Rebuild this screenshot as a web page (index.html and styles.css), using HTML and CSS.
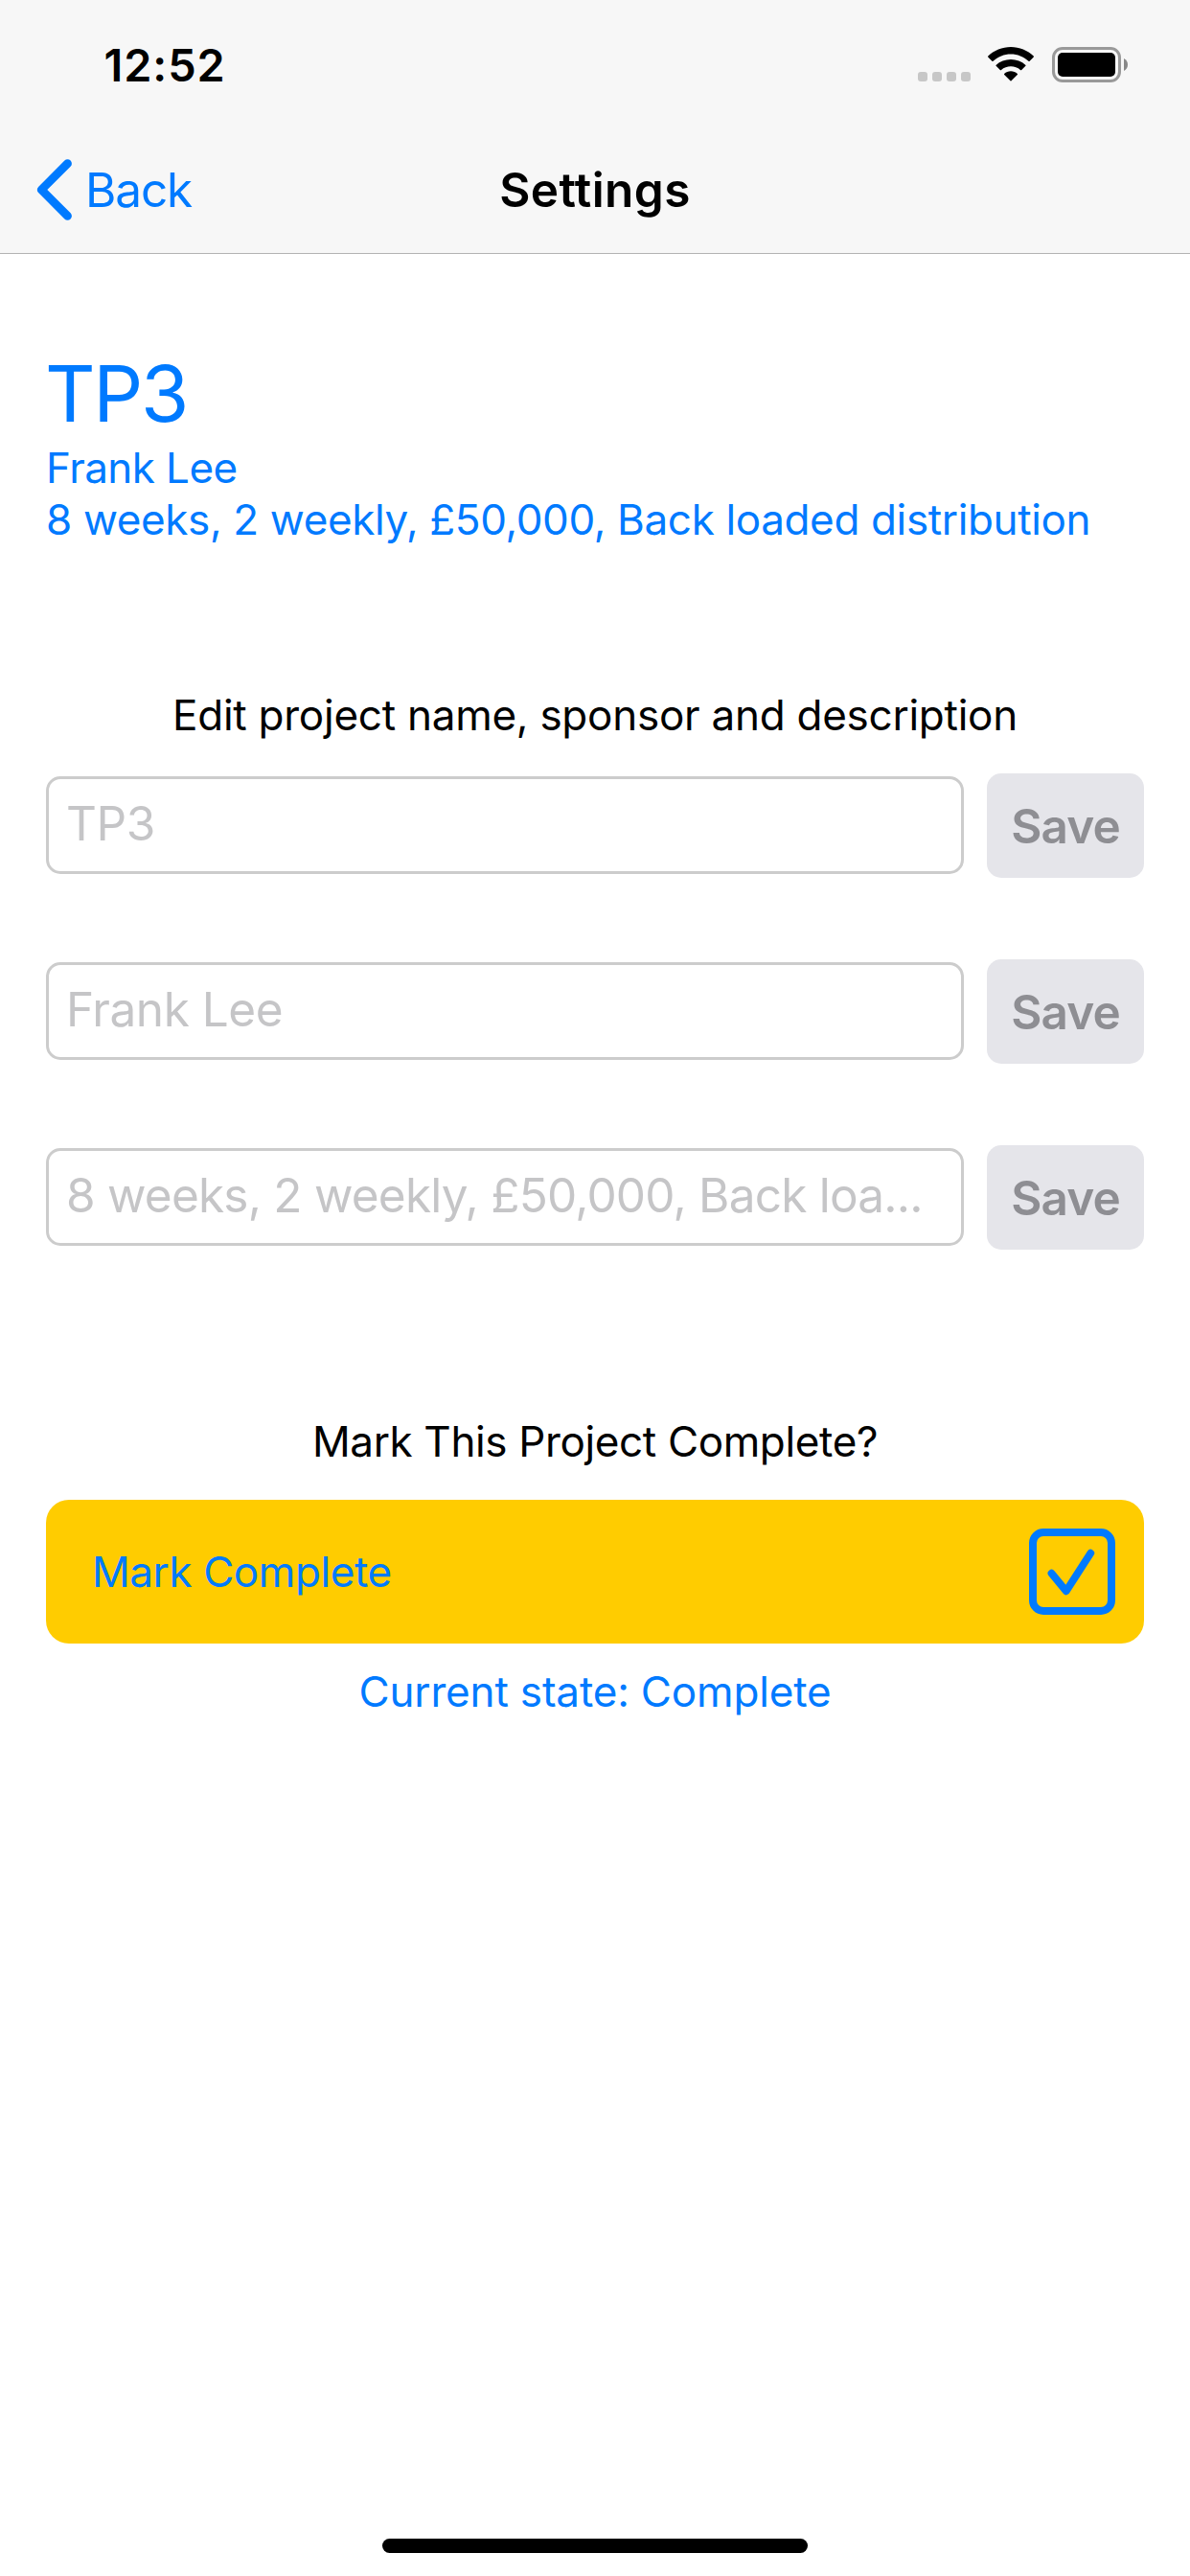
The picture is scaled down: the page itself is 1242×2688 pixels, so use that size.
FILE: index.html
```html
<!DOCTYPE html>
<html lang="en">
<head>
<meta charset="utf-8">
<title>Settings</title>
<link rel="stylesheet" href="styles.css">
</head>
<body>
<header class="header">
  <div class="status-bar">
    <span class="time">12:52</span>
    <div class="status-icons">
      <div class="dots"><i></i><i></i><i></i><i></i></div>
      <svg class="wifi" width="48" height="36" viewBox="0 0 48 36">
        <path d="M24 0C33 0 41.500 3.500 48 9.800Q48 10.300 47.600 10.700L43.600 14.700Q43.100 15.200 42.500 14.700C37.500 10 31 7.400 24 7.400S10.500 10 5.500 14.700Q4.900 15.200 4.400 14.700L.4 10.700Q0 10.300 0 9.800C6.500 3.500 15 0 24 0Z"/>
        <path d="M24 13C29.800 13 35.200 15.100 39.500 18.900Q39.800 19.400 39.400 19.800L35.200 24Q34.600 24.500 34 24C31.200 21.600 27.700 20.300 24 20.300S16.800 21.600 14 24Q13.400 24.500 12.800 24L8.600 19.800Q8.200 19.400 8.500 18.900C12.800 15.100 18.200 13 24 13Z"/>
        <path d="M24 25.300C26.600 25.300 29 26.300 30.900 28Q31.200 28.500 30.800 28.900L24.500 35.200Q24 35.700 23.500 35.200L17.200 28.900Q16.800 28.500 17.100 28C19 26.300 21.400 25.300 24 25.300Z"/>
      </svg>
      <svg class="battery" width="79" height="37" viewBox="0 0 79 37">
        <rect x="1.500" y="1.500" width="69" height="34" rx="9.500" fill="none" stroke="#999" stroke-width="3"/>
        <rect x="6" y="6" width="60" height="25" rx="5"/>
        <path d="M75 12C77.700 13.400 79 15.700 79 18.500S77.700 23.600 75 25Z" fill="#888"/>
      </svg>
    </div>
  </div>
  <nav class="nav">
    <a class="back">
      <svg class="chevron" width="38" height="64" viewBox="0 0 38 64"><path d="M32.500 4.700L5.200 32L32.500 59.300" fill="none" stroke="#007aff" stroke-width="8.800" stroke-linecap="round" stroke-linejoin="round"/></svg>
      <span class="back-label">Back</span>
    </a>
    <h1 class="title">Settings</h1>
    <span></span>
  </nav>
</header>
<main class="main">
  <section class="summary">
    <h2 class="name">TP3</h2>
    <p class="text sponsor">Frank Lee</p>
    <p class="text description">8 weeks, 2 weekly, £50,000, Back loaded distribution</p>
  </section>
  <section class="edit">
    <p class="text center hint">Edit project name, sponsor and description</p>
    <div class="rows">
      <div class="row"><div class="field">TP3</div><button class="save">Save</button></div>
      <div class="row"><div class="field">Frank Lee</div><button class="save">Save</button></div>
      <div class="row"><div class="field field-long">8 weeks, 2 weekly, £50,000, Back loa...</div><button class="save">Save</button></div>
    </div>
  </section>
  <section class="complete">
    <p class="text center">Mark This Project Complete?</p>
    <div class="toggle">
      <span class="toggle-label">Mark Complete</span>
      <span class="checkbox"><svg width="90" height="90" viewBox="0 0 90 90"><path d="M23.500 46.700L38.700 65.300L64.300 25.700" fill="none" stroke="#007aff" stroke-width="7.800" stroke-linecap="round" stroke-linejoin="round"/></svg></span>
    </div>
    <p class="text center state">Current state: Complete</p>
  </section>
</main>
<footer class="home"><span class="indicator"></span></footer>
</body>
</html>
```
FILE: styles.css
```css
* { box-sizing: border-box; margin: 0; padding: 0; }
body { width: 1242px; height: 2688px; display: flex; flex-direction: column; background: #fff; color: #000; font-family: Inter, "Liberation Sans", sans-serif; }
.header { height: 265px; background: #f7f7f7; border-bottom: 1px solid #b3b3b3; }
.status-bar { height: 132px; display: flex; justify-content: space-between; padding: 36px 65px 0 108.5px; }
.time { font-size: 46.8px; font-weight: 600; line-height: 64px; letter-spacing: 0.93px; }
.status-icons { display: flex; align-items: flex-start; padding-top: 13px; }
.dots { display: flex; gap: 5px; padding-top: 26px; margin-right: 18px; }
.dots i { width: 10px; height: 10px; border-radius: 3px; background: #c7c7c7; }
.wifi { margin-right: 19px; }
.nav { height: 132px; display: grid; grid-template-columns: 1fr auto 1fr; line-height: 132px; font-size: 49.5px; }
.back { display: flex; align-items: center; padding-left: 38px; color: #007aff; }
.back-label { margin-left: 13px; letter-spacing: -1.12px; }
.title { font-size: 49.5px; font-weight: 600; letter-spacing: 0.42px; }
.main { flex: 1; padding: 95px 48px 0; }
.summary { color: #007aff; }
.name { margin-left: -1px; font-size: 81.5px; font-weight: 400; line-height: 101px; letter-spacing: -2.33px; }
.text { font-size: 44px; line-height: 54px; letter-spacing: -0.36px; white-space: nowrap; }
.sponsor { letter-spacing: -0.56px; }
.hint { letter-spacing: -0.25px; }
.center { text-align: center; }
.edit { margin-top: 150px; }
.rows { display: flex; flex-direction: column; gap: 85px; margin-top: 34px; }
.row { display: flex; gap: 24px; height: 109px; }
.field { flex: 1; height: 102px; margin-top: 3px; padding-left: 18px; border: 3px solid #ccc; border-radius: 15px; font-size: 49.5px; line-height: 92px; letter-spacing: -0.45px; color: #c5c5c7; white-space: nowrap; }
.field-long { letter-spacing: -0.78px; }
.save { width: 164px; border: 0; border-radius: 15px; background: #e5e5ea; color: #8e8e93; font: 600 49.5px/110px Inter, "Liberation Sans", sans-serif; letter-spacing: -0.88px; }
.complete { margin-top: 173px; }
.toggle { display: flex; align-items: center; justify-content: space-between; height: 150px; margin-top: 34px; padding: 0 30px 0 48px; border-radius: 24px; background: #fc0; color: #007aff; }
.toggle-label { font-size: 44px; line-height: 150px; letter-spacing: -0.42px; }
.checkbox { width: 90px; height: 90px; border: 8px solid #007aff; border-radius: 15px; }
.checkbox svg { display: block; margin: -8px; }
.state { margin-top: 23px; color: #007aff; letter-spacing: -0.17px; }
.home { display: flex; justify-content: center; padding-bottom: 24px; }
.indicator { width: 444px; height: 15px; border-radius: 8px; background: #000; }
```
